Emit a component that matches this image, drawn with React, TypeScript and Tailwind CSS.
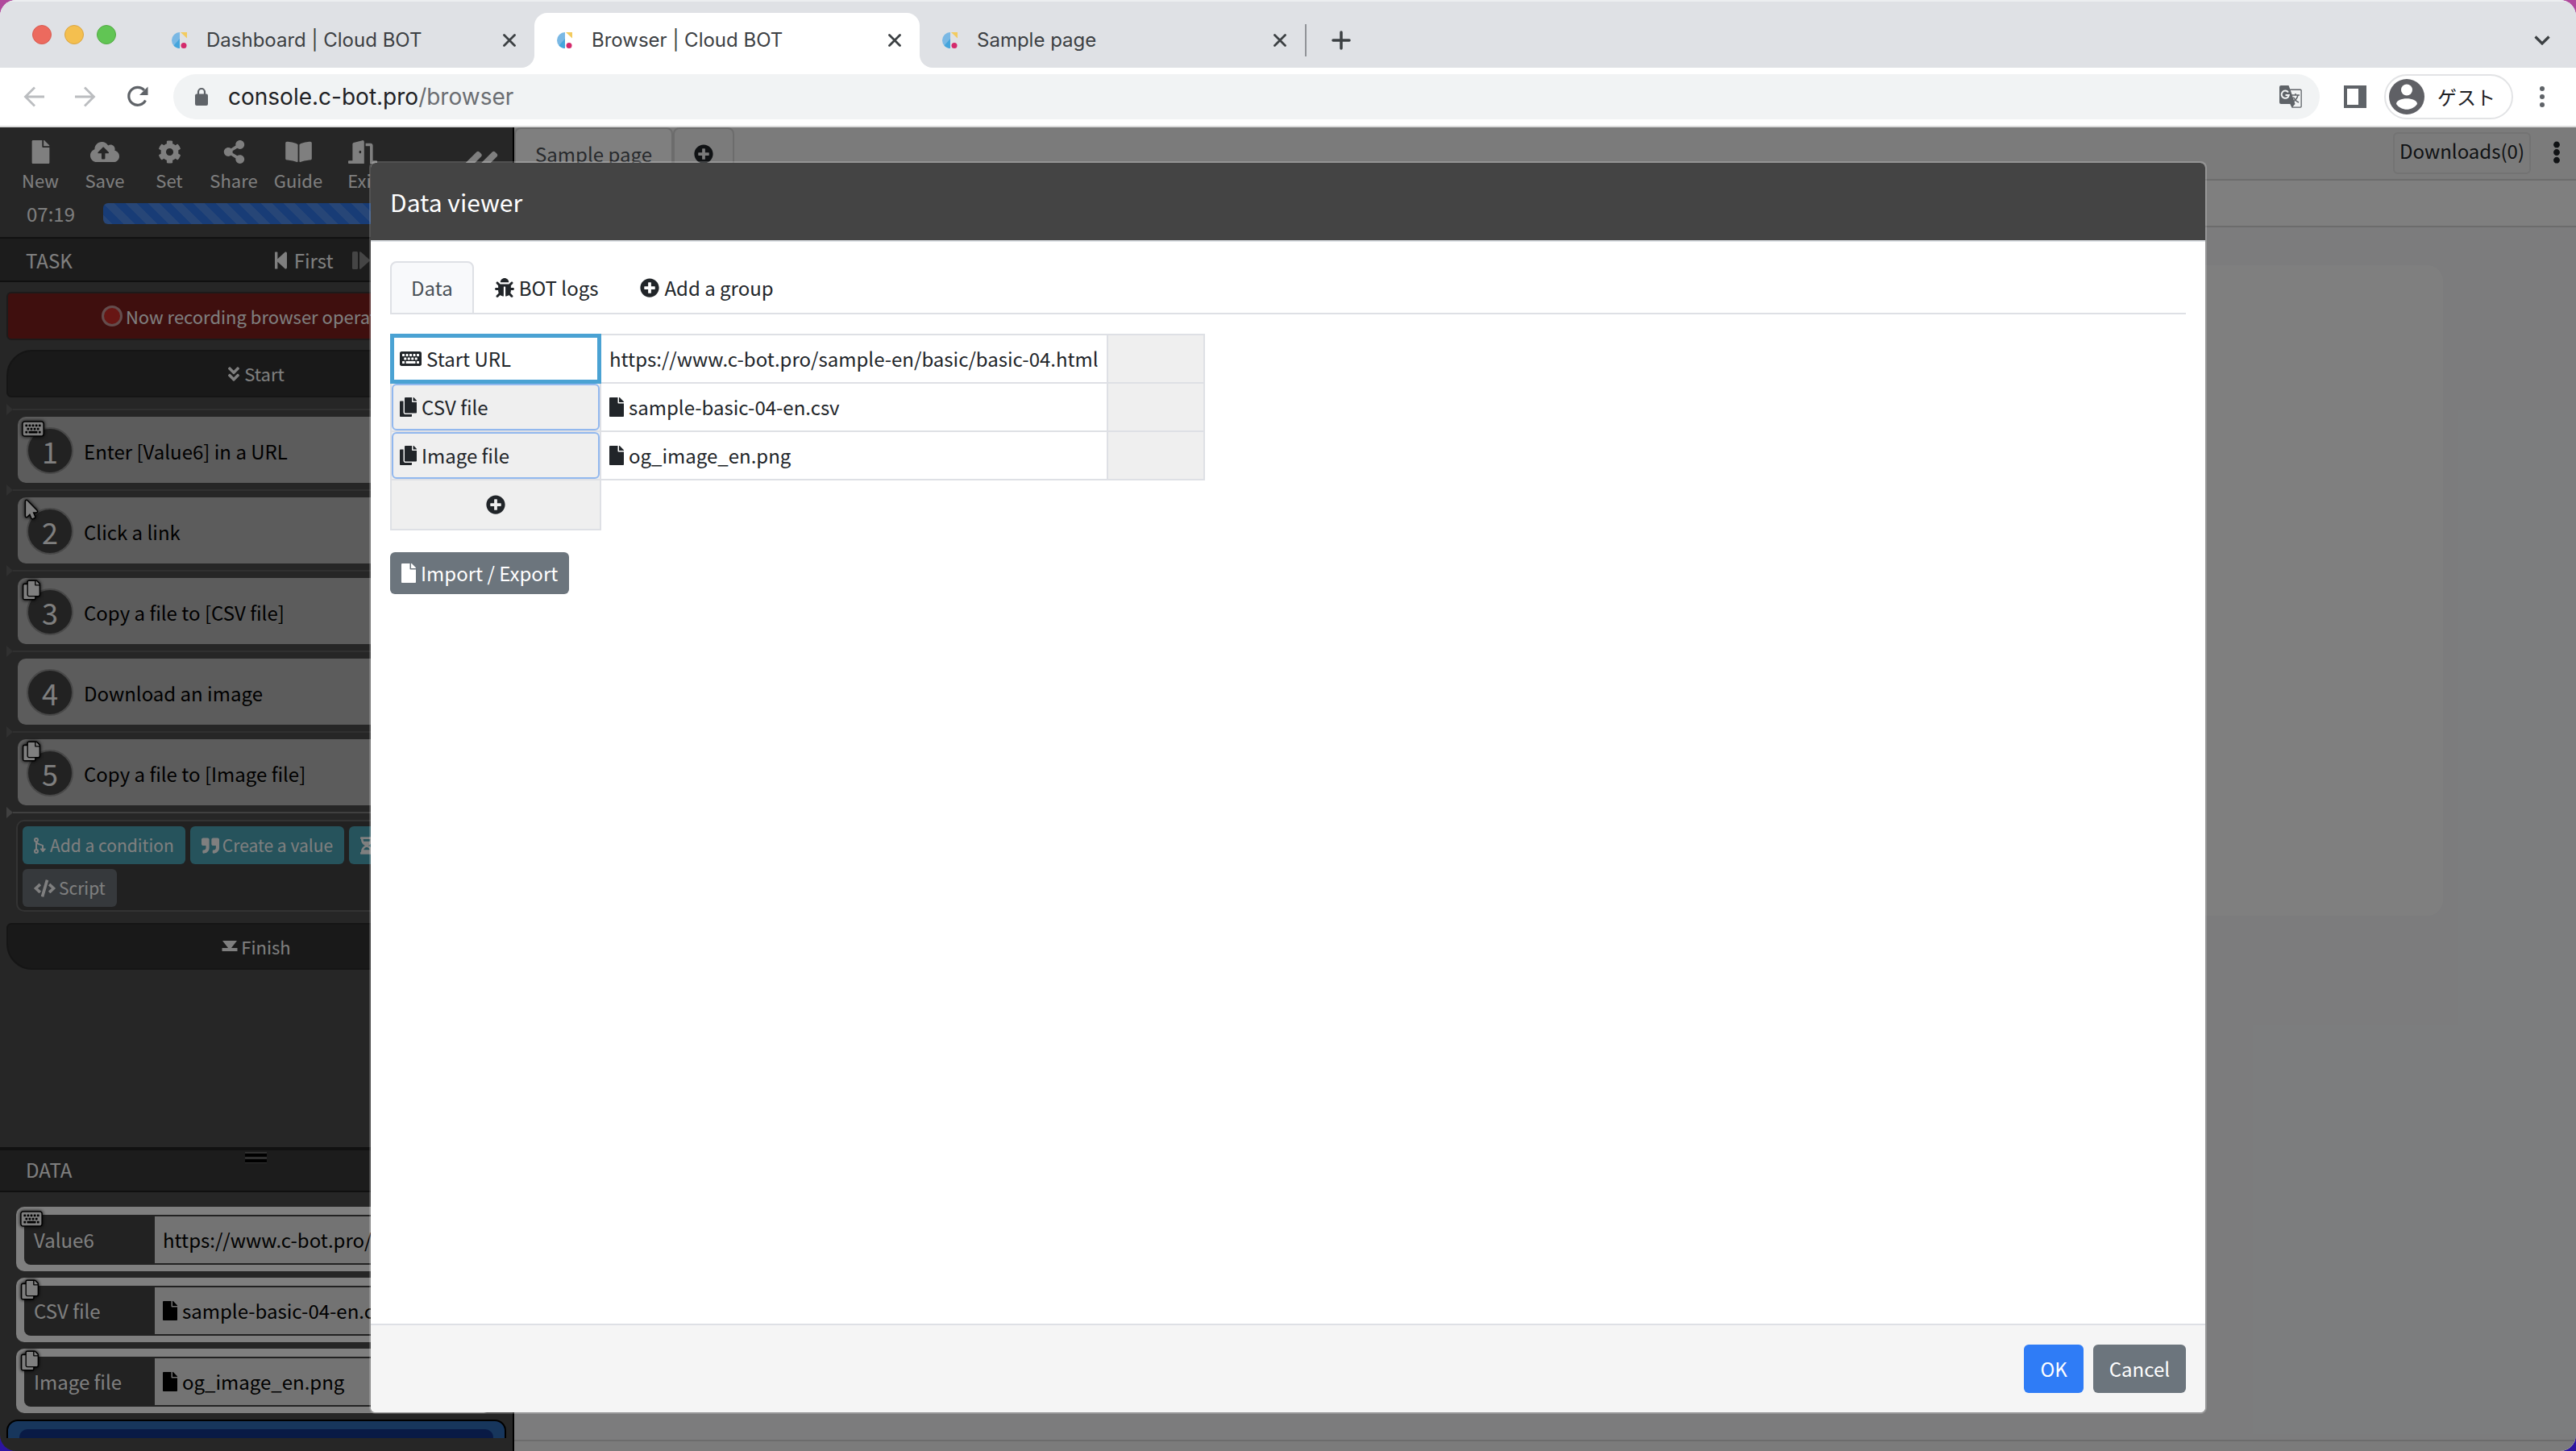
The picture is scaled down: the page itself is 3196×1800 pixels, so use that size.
import type { ComponentType, ReactNode } from "react";
import clsx from "clsx";
import {
  FaAngleDoubleDown,
  FaAngleDoubleLeft,
  FaBookOpen,
  FaBug,
  FaCloudUploadAlt,
  FaCode,
  FaCog,
  FaCopy,
  FaDoorOpen,
  FaEllipsisV,
  FaFile,
  FaHourglassHalf,
  FaKeyboard,
  FaMousePointer,
  FaPlusCircle,
  FaQuoteRight,
  FaShareAlt,
  FaStepBackward,
} from "react-icons/fa";

type Icon = ComponentType<{ className?: string }>;

const actions: { label: string; icon: Icon; size: string }[] = [
  { label: "New", icon: FaFile, size: "size-[29px]" },
  { label: "Save", icon: FaCloudUploadAlt, size: "h-[29px] w-[36px]" },
  { label: "Set", icon: FaCog, size: "size-[29px]" },
  { label: "Share", icon: FaShareAlt, size: "size-[29px]" },
  { label: "Guide", icon: FaBookOpen, size: "h-[29px] w-[33px]" },
  { label: "Exit", icon: FaDoorOpen, size: "h-[29px] w-[36px]" },
];

const steps: { text: string; icon?: Icon }[] = [
  { text: "Enter [Value6] in a URL", icon: FaKeyboard },
  { text: "Click a link", icon: FaMousePointer },
  { text: "Copy a file to [CSV file]", icon: FaCopy },
  { text: "Download an image" },
  { text: "Copy a file to [Image file]", icon: FaCopy },
];

const START_URL = "https://www.c-bot.pro/sample-en/basic/basic-04.html";

const values: { name: string; value: string; icon: Icon; file: boolean }[] = [
  { name: "Value6", value: START_URL, icon: FaKeyboard, file: false },
  { name: "CSV file", value: "sample-basic-04-en.csv", icon: FaCopy, file: true },
  { name: "Image file", value: "og_image_en.png", icon: FaCopy, file: true },
];

function Favicon() {
  return (
    <svg viewBox="0 0 20 20" className="size-5 shrink-0">
      <path d="M11 0v20A10 10 0 0 1 11 0z" fill="#7ab8e4" />
      <path d="M11 8v12A10 10 0 0 1 3.5 16.5z" fill="#45a5dc" />
      <path d="M12 0h8v7.5z" fill="#f3cb5f" />
      <circle cx="16" cy="16.5" r="3.5" fill="#d42a6c" />
    </svg>
  );
}

function CloseIcon({ className }: { className?: string }) {
  return (
    <svg viewBox="0 0 16 16" className={clsx("size-4", className)} fill="none" stroke="#3c4043" strokeWidth="2.8" strokeLinecap="round">
      <path d="M1.5 1.5l13 13M14.5 1.5l-13 13" />
    </svg>
  );
}

function BranchIcon({ className }: { className?: string }) {
  return (
    <svg viewBox="0 0 16 20" className={className} fill="none" stroke="currentColor" strokeWidth="2">
      <circle cx="3" cy="3" r="2" />
      <circle cx="3" cy="17" r="2" />
      <path d="M3 5v10M3 5c1 4 5 3 8 5v5" />
      <path d="M8 14h6.5l-3.2 4z" fill="currentColor" strokeWidth="1" />
    </svg>
  );
}

function FinishIcon({ className }: { className?: string }) {
  return (
    <svg viewBox="0 0 20 16" className={className} fill="currentColor">
      <path d="M1 1h18l-7 9h7.5v4H.5v-4H8z" />
    </svg>
  );
}

function StepForwardIcon({ className }: { className?: string }) {
  return (
    <svg viewBox="0 0 22 22" className={className} fill="currentColor">
      <rect x="0" y="0" width="7" height="22" rx="1.5" />
      <path d="M9 1.5C9 0 10 0 11 .8l10 9c.8.7.8 1.7 0 2.4l-10 9c-1 .8-2 .8-2-.7z" />
    </svg>
  );
}

function BrowserTab({ title, active }: { title: string; active?: boolean }) {
  return (
    <div
      className={clsx(
        "relative flex h-[68px] w-[478px] items-center rounded-t-2xl pr-[23px] pl-[27px]",
        active && "bg-white",
      )}
    >
      {active && (
        <>
          <span className="absolute bottom-0 -left-4 size-4 bg-white">
            <span className="block size-full rounded-br-2xl bg-[#dfe1e5]" />
          </span>
          <span className="absolute -right-4 bottom-0 size-4 bg-white">
            <span className="block size-full rounded-bl-2xl bg-[#dfe1e5]" />
          </span>
        </>
      )}
      <Favicon />
      <span className="ml-6 flex-1 text-2xl text-[#3c4043]">{title}</span>
      <button aria-label={`Close ${title}`}>
        <CloseIcon />
      </button>
    </div>
  );
}

function BrowserChrome() {
  return (
    <header className="shrink-0 border-b-2 border-[#dcdcdc] bg-white font-[Inter,sans-serif]">
      <div className="flex h-[84px] items-end border-t-2 border-[#eceef0] bg-[#dfe1e5]">
        <div className="flex w-[185px] gap-4 self-start pt-[29px] pl-10">
          <span className="size-6 rounded-full border border-[#d85a50] bg-[#ec6a5e]" />
          <span className="size-6 rounded-full border border-[#dba540] bg-[#f4bf4f]" />
          <span className="size-6 rounded-full border border-[#52aa43] bg-[#61c554]" />
        </div>
        <BrowserTab title="Dashboard | Cloud BOT" />
        <BrowserTab title="Browser | Cloud BOT" active />
        <BrowserTab title="Sample page" />
        <div className="flex h-[68px] flex-1 items-center">
          <span className="h-10 w-0.5 bg-[#909398]" />
          <button aria-label="New tab" className="ml-[31px]">
            <svg viewBox="0 0 24 24" className="size-6" stroke="#3c4043" strokeWidth="3.5" strokeLinecap="round">
              <path d="M12 2v20M2 12h20" />
            </svg>
          </button>
          <button aria-label="Search tabs" className="mr-8 ml-auto">
            <svg viewBox="0 0 20 12" className="h-3 w-5" fill="none" stroke="#3c4043" strokeWidth="3.2">
              <path d="M1.5 1.5L10 10l8.5-8.5" />
            </svg>
          </button>
        </div>
      </div>

      <div className="flex h-[72px] items-center">
        <div className="flex w-[215px] items-center gap-[38px] pl-[29px]">
          <button aria-label="Back">
            <svg viewBox="0 0 26 26" className="size-[26px]" fill="none" stroke="#bbbdc0" strokeWidth="2.8">
              <path d="M26 13H3M14 1.5L2.5 13 14 24.5" />
            </svg>
          </button>
          <button aria-label="Forward">
            <svg viewBox="0 0 26 26" className="size-[26px]" fill="none" stroke="#bbbdc0" strokeWidth="2.8">
              <path d="M0 13h23M12 1.5L23.5 13 12 24.5" />
            </svg>
          </button>
          <button aria-label="Reload">
            <svg viewBox="0 0 28 28" className="size-7" fill="none" stroke="#5f6368" strokeWidth="3.2">
              <path d="M23.5 18.5A11 11 0 1 1 22 6" />
              <path d="M26.5 1.5v10.5H16z" fill="#5f6368" stroke="none" />
            </svg>
          </button>
        </div>
        <div className="flex h-14 flex-1 items-center rounded-full bg-[#f1f3f4] pr-[22px] pl-[26px]">
          <svg viewBox="0 0 18 24" className="h-6 w-[18px]" fill="#5f6368">
            <rect x="1" y="8.5" width="16" height="14.5" rx="2" />
            <path d="M5 9V6a4 4 0 0 1 8 0v3" fill="none" stroke="#5f6368" strokeWidth="2.2" />
          </svg>
          <p className="ml-6 flex-1 text-[28px] text-[#202124]">
            console.c-bot.pro<span className="text-[#6b6e72]">/browser</span>
          </p>
          <button aria-label="Translate this page">
            <svg viewBox="0 0 28 28" className="size-7" fill="none">
              <path d="M2 0h9.5l1.7 4.5H26a1.8 1.8 0 0 1 1.8 1.8V26a1.8 1.8 0 0 1-1.8 1.8H15.5L13.3 23H2a2 2 0 0 1-2-2V2a2 2 0 0 1 2-2z" fill="#5f6368" />
              <path d="M13.8 6H26c.3 0 .5.2.5.5V26c0 .3-.2.5-.5.5h-9.5l3-3.5z" fill="#f1f3f4" />
              <path d="M11 8.5A4.6 4.6 0 1 0 11.8 12H7.5" stroke="#f1f3f4" strokeWidth="2" />
              <path d="M15 12h10M20 10v2M23 12c-.7 3.5-3 6.5-6.5 8.5M17.5 14.5c1 2.5 3 5 6.5 6.5" stroke="#5f6368" strokeWidth="1.5" />
            </svg>
          </button>
        </div>
        <button aria-label="Side panel" className="ml-[30px]">
          <svg viewBox="0 0 28 28" className="size-7">
            <path d="M0 0h28v28H0zM4 4v20h14V4z" fill="#5f6368" fillRule="evenodd" />
          </svg>
        </button>
        <button className="ml-[22px] flex h-14 w-40 items-center rounded-full border-2 border-[#e2e3e5] pl-1">
          <svg viewBox="0 0 44 44" className="size-11">
            <circle cx="22" cy="22" r="22" fill="#5f6065" />
            <circle cx="22" cy="13.5" r="7" fill="#fff" />
            <path d="M9 31c0-9 26-9 26 0-6 9-20 9-26 0z" fill="#fff" />
          </svg>
          <span className="ml-4 font-['Noto_Sans_CJK_JP',sans-serif] text-2xl text-[#202124]">ゲスト</span>
        </button>
        <button aria-label="Menu" className="mr-[39px] ml-[33px]">
          <svg viewBox="0 0 6 26" className="h-[26px] w-1.5" fill="#5f6368">
            <circle cx="3" cy="3" r="3" />
            <circle cx="3" cy="13" r="3" />
            <circle cx="3" cy="23" r="3" />
          </svg>
        </button>
      </div>
    </header>
  );
}

function KindBadge({ icon: KindIcon }: { icon: Icon }) {
  const wide = KindIcon === FaKeyboard;
  return (
    <KindIcon
      className={clsx(
        "absolute top-1 left-1.5 z-10 overflow-visible stroke-black stroke-[70] text-white [paint-order:stroke] drop-shadow-[0_0_2px_black]",
        wide ? "h-[22px] w-[26px]" : "size-[22px]",
      )}
    />
  );
}

function Divider({ bright }: { bright?: boolean }) {
  return (
    <div className={clsx("flex h-[18px] items-center", bright ? "text-[#808080]" : "text-[#606060]")}>
      <svg viewBox="0 0 8 14" className="h-3.5 w-2" fill="currentColor">
        <path d="M0 0l8 7-8 7z" />
      </svg>
      <span className="h-0.5 flex-1 bg-current" />
    </div>
  );
}

function PanelHeader({ className, children }: { className: string; children: ReactNode }) {
  return (
    <div className={clsx("relative flex items-center border-b-2 border-[#202020] bg-[#383838] pl-8 text-2xl", className)}>
      {children}
    </div>
  );
}

function SmallButton({ icon: ButtonIcon, size, gray, children }: { icon: Icon; size: string; gray?: boolean; children: ReactNode }) {
  return (
    <button
      className={clsx(
        "flex h-[47px] items-center gap-1 rounded-md px-3.5 text-[21px] whitespace-nowrap",
        gray ? "bg-[#6c7278]" : "bg-[#4ca6b8]",
      )}
    >
      <ButtonIcon className={size} />
      {children}
    </button>
  );
}

function Sidebar() {
  return (
    <aside className="flex w-[638px] shrink-0 flex-col border-r-2 border-black bg-[#4c4c4c] text-white">
      <div className="h-[138px] shrink-0 border-b-2 border-[#222]">
        <div className="flex h-[84px] pt-4 pl-[10px]">
          {actions.map(({ label, icon: ActionIcon, size }) => (
            <button key={label} className="flex w-20 flex-col items-center">
              <ActionIcon className={size} />
              <span className="mt-1 text-[22px] leading-8">{label}</span>
            </button>
          ))}
          <button aria-label="Collapse" className="mt-1 mr-4 ml-auto self-start">
            <FaAngleDoubleLeft className="h-[52px] w-[46px]" />
          </button>
        </div>
        <div className="flex items-center pt-2.5 pr-5 pl-[33px]">
          <span className="w-[95px] text-2xl leading-[26px]">07:19</span>
          <div className="h-[26px] flex-1 rounded-md bg-[#3078ec] bg-[linear-gradient(45deg,rgba(255,255,255,.15)_25%,transparent_25%,transparent_50%,rgba(255,255,255,.15)_50%,rgba(255,255,255,.15)_75%,transparent_75%,transparent)] bg-size-[28px_28px]" />
        </div>
      </div>

      <PanelHeader className="h-[54px] pt-0.5">
        TASK
        <button className="ml-auto flex items-center gap-1.5">
          <FaStepBackward className="h-6 w-[21px]" />
          First
        </button>
        <button className="mr-[118px] ml-6 flex items-center gap-2 text-[#8a8a8a]">
          <StepForwardIcon className="size-[22px]" />
          Step
        </button>
      </PanelHeader>

      <div className="min-h-0 flex-1 overflow-hidden px-2 pt-3 text-[22px]">
        <div className="flex h-[60px] items-center justify-center gap-1 rounded-md border-2 border-[#3a3434] bg-[#7e1e1c]">
          <span className="size-[26px] rounded-full border-3 border-[#c89a9a] bg-[#d02c28]" />
          Now recording browser operations
        </div>
        <div className="mt-3 flex h-[59px] items-center justify-center gap-1.5 rounded-md rounded-t-[32px] border-2 border-[#2a2a2a] bg-[#323232]">
          <FaAngleDoubleDown className="h-6 w-3.5" />
          Start
        </div>
        <ol className="mt-1.5">
          {steps.map(({ text, icon }, i) => (
            <li key={text}>
              <Divider />
              <div className="relative mr-2 ml-[14px] flex h-[82px] items-center rounded-[10px] bg-[#b8b8b8] pt-0.5 pl-[11px] text-2xl text-black">
                {icon && <KindBadge icon={icon} />}
                <span className="flex size-[58px] items-center justify-center rounded-full border-2 border-[#909090] bg-[#444] text-4xl text-white">
                  {i + 1}
                </span>
                <span className="ml-[13px] pt-0.5">{text}</span>
              </div>
            </li>
          ))}
        </ol>
        <Divider bright />
        <div className="mr-2 ml-3 flex h-[114px] flex-wrap content-start gap-1.5 overflow-hidden rounded-[10px] border-2 border-[#666] bg-[#424242] p-1.5">
          <SmallButton icon={BranchIcon} size="h-5 w-4">Add a condition</SmallButton>
          <SmallButton icon={FaQuoteRight} size="size-[22px]">Create a value</SmallButton>
          <SmallButton icon={FaHourglassHalf} size="h-[22px] w-4">Wait</SmallButton>
          <div className="basis-full">
            <SmallButton icon={FaCode} size="h-[22px] w-[27px]" gray>
              Script
            </SmallButton>
          </div>
        </div>
        <div className="mt-[14px] flex h-[58px] items-center justify-center gap-1 rounded-md rounded-b-[32px] border-2 border-[#2a2a2a] bg-[#323232]">
          <FinishIcon className="h-4 w-5" />
          Finish
        </div>
      </div>

      <section className="h-[377px] shrink-0 border-t-4 border-[#222]">
        <PanelHeader className="h-[52px] pb-0.5">
          DATA
          <span className="absolute top-0.5 left-[304px] flex h-3.5 w-[27px] flex-col justify-center gap-[3px] bg-[#606060]">
            <span className="h-1 bg-black" />
            <span className="h-1 bg-black" />
          </span>
        </PanelHeader>
        <div className="h-[305px] overflow-hidden pt-[18px]">
          <div className="flex flex-col gap-2 pr-[26px] pl-5 text-2xl">
            {values.map(({ name, value, icon, file }) => (
              <div key={name} className="relative flex h-20 items-center rounded-[10px] bg-white pl-2.5">
                <KindBadge icon={icon} />
                <div className="mt-0.5 flex h-[62px] min-w-0 flex-1 rounded-bl-lg border-y-2 border-[#444] bg-[#444]">
                  <span className="w-[162px] shrink-0 self-center pl-3">{name}</span>
                  <span className="flex min-w-0 flex-1 items-center gap-1.5 overflow-hidden bg-[#e6e6e6] pl-[10px] whitespace-nowrap text-black">
                    {file && <FaFile className="h-6 w-[18px] shrink-0" />}
                    {value}
                  </span>
                </div>
              </div>
            ))}
          </div>
          <div className="mx-2 mt-2 h-16 rounded-t-[14px] border-2 border-black bg-[#2e6cb8] px-3.5 pt-2.5">
            <div className="h-12 rounded-t-[10px] bg-[#12348a]" />
          </div>
        </div>
      </section>
    </aside>
  );
}

function Workspace() {
  return (
    <main className="flex min-w-0 flex-1 flex-col bg-[#f8f9fb] text-2xl text-[#212529]">
      <div className="flex h-[66px] items-start border-b-2 border-[#d8d8d8] bg-[#f6f6f6]">
        <button className="h-16 w-[197px] rounded-t-lg border-2 border-[#d8d8d8] bg-white pt-0.5 text-[#50555a]">Sample page</button>
        <button aria-label="Add tab" className="flex h-16 w-[76px] items-center justify-center rounded-t-lg border-2 border-[#d8d8d8] pt-0.5">
          <FaPlusCircle className="size-6" />
        </button>
        <button className="mt-1.5 ml-auto h-[52px] w-[171px] rounded-md border-2 border-[#e6e6e6] pb-1.5">Downloads(0)</button>
        <button aria-label="More" className="mt-[17px] mr-[10px] ml-[18px]">
          <FaEllipsisV className="size-7" />
        </button>
      </div>
      <div className="h-[58px] border-b-2 border-[#d8d8d8] bg-white" />
      <div className="flex-1 px-[165px] pt-[47px]">
        <div className="h-[807px] rounded-[20px] bg-white" />
      </div>
      <div className="h-[14px] border-t-2 border-[#d8d8d8] bg-[#f6f6f6]" />
    </main>
  );
}

function DataViewer() {
  return (
    <div
      role="dialog"
      aria-labelledby="viewer-title"
      className="flex w-full flex-col overflow-hidden rounded-lg border-2 border-white/20 bg-white bg-clip-padding text-2xl text-[#212529]"
    >
      <div className="flex h-[98px] items-center border-b-2 border-[#dee2e6] bg-[#444] px-6">
        <h2 id="viewer-title" className="text-[30px] text-white">
          Data viewer
        </h2>
      </div>

      <div className="flex-1 p-6">
        <div role="tablist" className="flex border-b-2 border-[#dee0e5]">
          <button role="tab" aria-selected="true" className="-mb-0.5 h-[66px] rounded-t-lg border-2 border-[#dee0e5] bg-[#f8f9fb] px-6 text-[#495057]">
            Data
          </button>
          <button role="tab" className="-mb-0.5 flex h-[66px] items-center gap-1.5 px-[26px]">
            <FaBug className="size-6" />
            BOT logs
          </button>
          <button role="tab" className="-mb-0.5 flex h-[66px] items-center gap-1.5 px-[26px]">
            <FaPlusCircle className="size-6" />
            Add a group
          </button>
        </div>

        <table className="mt-6 border-collapse">
          <tbody>
            {values.map(({ name, value, icon: ValueIcon, file }, i) => (
              <tr key={name} className="h-[60px]">
                <th scope="row" className="w-[260px] border-2 border-[#dee0e5] bg-[#efefef] p-0 text-left font-normal">
                  <button
                    className={clsx(
                      "relative flex h-[58px] w-full items-center gap-1.5",
                      i === 0
                        ? "z-10 bg-white pl-[10px] outline-5 -outline-offset-3 outline-[#4aa2d3]"
                        : "rounded-md border-2 border-[#92b8ee] pl-2",
                    )}
                  >
                    <ValueIcon className={file ? "h-6 w-[21px]" : "h-6 w-[27px]"} />
                    {i === 0 ? "Start URL" : name}
                  </button>
                </th>
                <td className="border-2 border-[#dee0e5] px-[10px] py-0">
                  <span className="flex items-center gap-1.5 whitespace-nowrap">
                    {file && <FaFile className="h-6 w-[18px]" />}
                    {value}
                  </span>
                </td>
                <td className="w-[120px] border-2 border-[#dee0e5] bg-[#efefef]" />
              </tr>
            ))}
            <tr className="h-[62px]">
              <td className="border-2 border-[#dee0e5] bg-[#efefef] p-0">
                <button aria-label="Add value" className="flex w-full justify-center">
                  <FaPlusCircle className="size-6" />
                </button>
              </td>
            </tr>
          </tbody>
        </table>

        <button className="mt-[27px] flex h-[52px] items-center gap-1.5 rounded-md bg-[#6c757d] px-[14px] text-white">
          <FaFile className="h-6 w-[18px]" />
          Import / Export
        </button>
      </div>

      <div className="flex h-[110px] items-center justify-end gap-3 border-t-2 border-[#dee0e5] bg-[#f5f5f5] px-6 text-white">
        <button className="h-[60px] rounded-md bg-[#2f7cf6] px-5">OK</button>
        <button className="h-[60px] rounded-md bg-[#6c757d] px-5">Cancel</button>
      </div>
    </div>
  );
}

export default function App() {
  return (
    <div className="h-screen bg-[linear-gradient(to_bottom,#b04a9c,#2c14a0)]">
      <div className="flex h-full flex-col overflow-hidden rounded-[20px] font-['Noto_Sans_CJK_JP','Noto_Sans',sans-serif]">
        <BrowserChrome />
        <div className="relative flex min-h-0 flex-1">
          <Sidebar />
          <Workspace />
          <div className="absolute inset-0 z-20 flex bg-black/50 px-[458px] pt-[42px] pb-[46px]">
            <DataViewer />
          </div>
        </div>
      </div>
    </div>
  );
}
